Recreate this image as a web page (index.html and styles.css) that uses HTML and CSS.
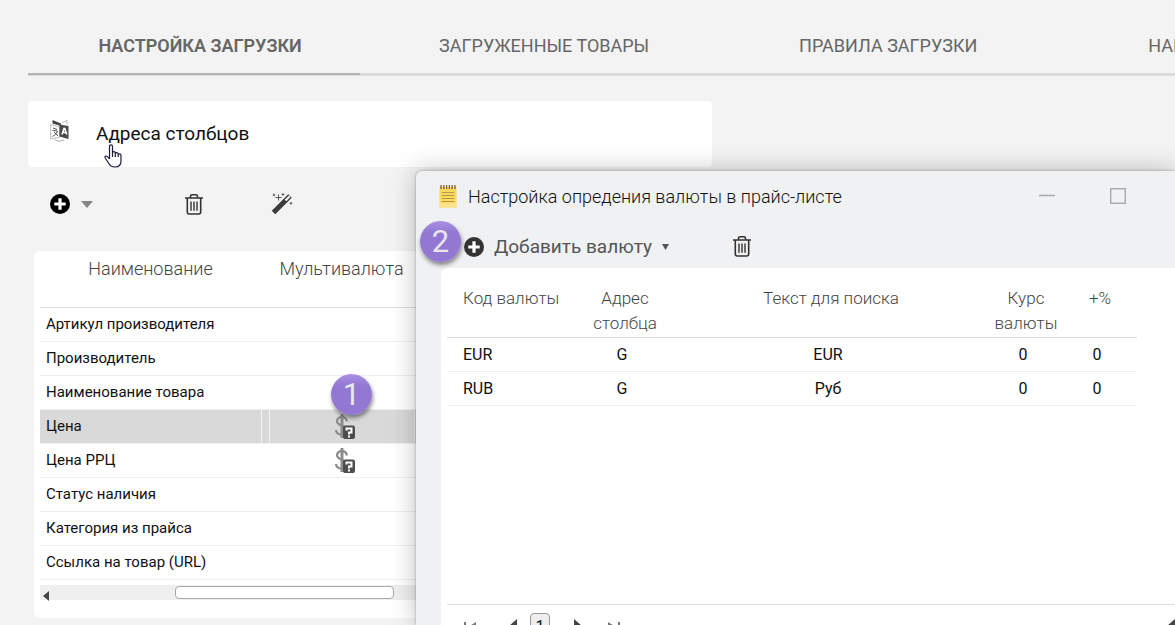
FILE: index.html
```html
<!DOCTYPE html>
<html lang="ru">
<head>
<meta charset="utf-8">
<title>Настройка загрузки</title>
<link rel="stylesheet" href="styles.css">
</head>
<body>
<svg class="defs" aria-hidden="true">
  <symbol id="plus" viewBox="0 0 20 20"><circle cx="10" cy="10" r="10" fill="currentColor"/><path d="M10 4.300v11.400M4.300 10h11.400" stroke="#fff" stroke-width="3.200"/></symbol>
  <symbol id="trash" viewBox="0 0 18 21"><g fill="none" stroke="currentColor" stroke-width="1.600"><path d="M0 4h18M5.500 4V2.200Q5.500 .8 7 .8h4q1.500 0 1.500 1.400V4M2.300 4v14q0 2 2 2h9.400q2 0 2-2V4"/><path d="M6 7.500v9.300M9 7.500v9.300M12 7.500v9.300" stroke-width="1.400"/></g></symbol>
  <symbol id="dollar" viewBox="0 0 20 25"><path d="M7 0v24" stroke="#8b8b8b" stroke-width="3"/><path d="M11.800 7.500C11.500 1.500 2 1.800 2 7c0 5.500 9.500 4 9.500 9.500 0 5.500-10 5.500-10.500-.5" fill="none" stroke="#8b8b8b" stroke-width="2.200"/><rect x="8" y="11.500" width="12" height="13.500" rx="2" fill="#4d4d4d"/><path d="M11.500 16.500v-2h5v4h-2.500v2M14 21.500v2" fill="none" stroke="#fff" stroke-width="2"/></symbol>
</svg>

<nav class="tabs">
  <a class="tab tab-active" href="#settings">НАСТРОЙКА ЗАГРУЗКИ</a>
  <a class="tab" href="#goods">ЗАГРУЖЕННЫЕ ТОВАРЫ</a>
  <a class="tab" href="#rules">ПРАВИЛА ЗАГРУЗКИ</a>
  <a class="tab tab-cut" href="#more">НАП</a>
</nav>

<main class="left">
  <section class="heading-card">
    <svg class="heading-icon" viewBox="0 0 20 22"><path d="M2.500 0 11 3.500V6L2.500 3.500z" fill="#444"/><path d="M.7 4.500 9.500 7v10.500L.7 18.800zM12 2.500l5-2v4" fill="#fff" stroke="#aaa" stroke-width=".8"/><path d="M9.500 4.500 18.500 6v13l-9-2.500z" fill="#4a4a4a"/><path d="m12 14.500 2-6h.8l2 6M12.800 12.500h3.200" fill="none" stroke="#fff" stroke-width="1.600"/><path d="m3 8 4 1.500M2.500 10.500l5 .5q-1.500 4-5 5.500M4 12l4 4" fill="none" stroke="#555" stroke-width="1"/><path d="M4.500 20q5 2.500 9.500 0" fill="none" stroke="#999" stroke-width=".8"/></svg>
    <h1 class="heading">Адреса столбцов</h1>
  </section>

  <div class="toolbar">
    <button class="tool tool-add" aria-label="Добавить"><svg class="icon-plus"><use href="#plus"/></svg><svg class="caret" viewBox="0 0 12 7"><path d="M0 0h12L6 7z" fill="#858585"/></svg></button>
    <button class="tool tool-trash" aria-label="Удалить"><svg class="icon-trash"><use href="#trash"/></svg></button>
    <button class="tool" aria-label="Автозаполнение"><svg class="icon-wand" viewBox="0 0 22 22"><path d="M2.500 19.500 19 3" stroke="#3b3b3b" stroke-width="5"/><path d="m14.500 7.500 4.300-4.300" stroke="#f3f3f3" stroke-width="2.200"/><path d="M7.500 1.500v6M4.500 4.500h6M3 .7v2.600M1.700 2h2.600M12 .2v2.600M10.700 1.500h2.600M20 9v2.600M18.700 10.300h2.600" stroke="#555" stroke-width="1"/></svg></button>
  </div>

  <section class="grid-card">
    <table class="fields">
      <colgroup><col class="c-name"><col class="c-gap"><col class="c-multi"><col></colgroup>
      <thead><tr><th>Наименование</th><th></th><th>Мультивалюта</th><th></th></tr></thead>
      <tbody>
        <tr><td>Артикул производителя</td><td></td><td></td><td></td></tr>
        <tr><td>Производитель</td><td></td><td></td><td></td></tr>
        <tr><td>Наименование товара</td><td></td><td></td><td></td></tr>
        <tr class="selected"><td>Цена</td><td></td><td class="multi"><svg class="icon-dollar"><use href="#dollar"/></svg></td><td></td></tr>
        <tr><td>Цена РРЦ</td><td></td><td class="multi"><svg class="icon-dollar"><use href="#dollar"/></svg></td><td></td></tr>
        <tr><td>Статус наличия</td><td></td><td></td><td></td></tr>
        <tr><td>Категория из прайса</td><td></td><td></td><td></td></tr>
        <tr><td>Ссылка на товар (URL)</td><td></td><td></td><td></td></tr>
      </tbody>
    </table>
    <div class="scroll-track"><svg class="scroll-arrow" viewBox="0 0 6 10"><path d="M6 0v10L0 5z" fill="#444"/></svg><div class="scroll-thumb"></div></div>
  </section>
</main>

<section class="dialog" role="dialog" aria-labelledby="dialog-title">
  <header class="dialog-head">
    <svg class="icon-note" viewBox="0 0 18 24"><rect x=".5" y="3" width="17" height="20.500" rx="1" fill="#fad85c"/><path d="M.5 19h17v4.500H.5z" fill="#fbe58d"/><path d="M3 8.500h12M3 11.500h12M3 14.500h12M3 17.500h12" stroke="#9a8646" stroke-width="1" opacity=".75"/><path d="M2 1v4M4.800 1v4M7.600 1v4M10.400 1v4M13.200 1v4M16 1v4" stroke="#8c6848" stroke-width="1.400"/></svg>
    <h2 class="dialog-title" id="dialog-title">Настройка опредения валюты в прайс-листе</h2>
    <button class="win-btn" aria-label="Свернуть"><svg class="win-icon" viewBox="0 0 16 16"><path d="M0 7.500h16" stroke="#aaa" stroke-width="1.500"/></svg></button>
    <button class="win-btn" aria-label="Развернуть"><svg class="win-icon" viewBox="0 0 16 16"><rect x=".7" y=".7" width="14.600" height="14.600" fill="none" stroke="#aaa" stroke-width="1.400"/></svg></button>
  </header>
  <div class="dialog-tools">
    <button class="tool add-currency"><svg class="icon-plus"><use href="#plus"/></svg><span>Добавить валюту</span><svg class="caret-small" viewBox="0 0 7 6"><path d="M0 0h7L3.500 6z" fill="#555"/></svg></button>
    <button class="tool" aria-label="Удалить валюту"><svg class="icon-trash"><use href="#trash"/></svg></button>
  </div>
  <div class="dialog-body">
    <table class="currencies">
      <colgroup><col class="k-code"><col class="k-addr"><col><col class="k-rate"><col class="k-pct"></colgroup>
      <thead><tr><th class="first">Код валюты</th><th>Адрес столбца</th><th>Текст для поиска</th><th>Курс валюты</th><th>+%</th></tr></thead>
      <tbody>
        <tr><td class="first">EUR</td><td>G</td><td>EUR</td><td>0</td><td>0</td></tr>
        <tr><td class="first">RUB</td><td>G</td><td>Руб</td><td>0</td><td>0</td></tr>
      </tbody>
    </table>
    <footer class="pager">
      <button class="page-btn" aria-label="Первая"><svg class="pg-end" viewBox="0 0 12 10"><path d="M0 0h2v10H0zM12 0v10L4 5z" fill="#777"/></svg></button>
      <button class="page-btn" aria-label="Назад"><svg class="pg-arrow" viewBox="0 0 8 14"><path d="M8 0v14L0 7z" fill="#444"/></svg></button>
      <button class="page-btn page-current">1</button>
      <button class="page-btn" aria-label="Вперёд"><svg class="pg-arrow" viewBox="0 0 8 14"><path d="M0 0v14l8-7z" fill="#444"/></svg></button>
      <button class="page-btn" aria-label="Последняя"><svg class="pg-end" viewBox="0 0 12 10"><path d="M10 0h2v10h-2zM0 0v10l8-5z" fill="#777"/></svg></button>
      <button class="page-btn page-far" aria-label="Свернуть список"><svg class="pg-arrow" viewBox="0 0 8 14"><path d="M8 0v14L0 7z" fill="#444"/></svg></button>
    </footer>
  </div>
</section>

<span class="badge badge-one">1</span>
<span class="badge badge-two">2</span>
<svg class="pointer" viewBox="0 0 18 24"><path d="M5.500 15V2.500Q5.500 .8 7 .8t1.500 1.700V9q0-1.400 1.400-1.400T11.300 9v1q.1-1.300 1.400-1.300T14.200 10v1q.2-1.100 1.400-1.100T17 11.300V17q0 6-6 6-4 0-5.500-2.500L1.200 14q-.8-1.800.8-2 1.500 0 3.500 3M8.500 9v4M11.300 9.500V13M14.200 10.500V13" fill="#fff" stroke="#1c1c3c" stroke-width="1.200" stroke-linejoin="round"/></svg>
</body>
</html>
```

FILE: styles.css
```css
* { box-sizing: border-box; }
html { height: 100%; }
body {
  position: relative;
  height: 100%;
  margin: 0;
  padding-left: 28px;
  overflow: hidden;
  background: #f3f3f3;
  color: #111;
  font-family: Roboto, "Liberation Sans", sans-serif;
  font-size: 16px;
}
button {
  padding: 0;
  border: 0;
  background: none;
  color: inherit;
  font: inherit;
}
svg { display: block; flex: none; }
.defs { position: absolute; width: 0; height: 0; }

.tabs {
  display: flex;
  height: 76px;
  padding-top: 16px;
  border-bottom: 3px solid #dadada;
}
.tab {
  position: relative;
  flex: 0 0 30%;
  color: #666;
  font-size: 18px;
  line-height: 60px;
  text-align: center;
  text-decoration: none;
  white-space: nowrap;
}
.tab-active { font-weight: 600; }
.tab-active::after {
  content: "";
  position: absolute;
  left: 0;
  right: 12px;
  bottom: -2px;
  height: 2px;
  background: #b5b5b5;
}
.tab-cut {
  flex: 1 1 0;
  min-width: 0;
  padding-left: 88px;
  overflow: hidden;
  text-align: left;
}

.left { width: 59.6%; padding-top: 25px; }
.heading-card {
  display: flex;
  align-items: center;
  height: 66px;
  padding-left: 22px;
  border-radius: 4px;
  background: #fff;
}
.heading-icon { width: 20px; height: 22px; margin-bottom: 6px; }
.heading { margin: 0 0 2px 26px; font-size: 19px; font-weight: 400; }

.toolbar {
  display: flex;
  align-items: center;
  height: 74px;
  padding-left: 22px;
}
.tool { display: flex; align-items: center; color: #333; }
.tool-add { gap: 11px; width: 135px; color: #000; }
.tool-trash { width: 86px; }
.icon-plus { width: 20px; height: 20px; }
.caret { width: 12px; height: 7px; }
.icon-trash { width: 18px; height: 21px; }
.icon-wand { width: 22px; height: 22px; }

.grid-card {
  margin: 10px 0 0 6px;
  padding: 0 6px 18px;
  border-radius: 6px;
  background: #fff;
}
table { width: 100%; border-collapse: collapse; table-layout: fixed; }
th { color: #444; font-weight: 300; vertical-align: top; }
.fields th {
  height: 56px;
  padding: 5px 0 0;
  border-bottom: 1px solid #ddd;
  font-size: 18px;
  line-height: 25px;
}
.fields td {
  height: 34px;
  padding: 0 0 0 6px;
  border-bottom: 1px solid #f0f0f0;
  font-size: 15px;
  line-height: 24px;
}
.c-name { width: 221px; }
.c-gap { width: 8px; }
.c-multi { width: 145px; }
.selected td { border-right: 1px solid #f4f4f4; background: #d9d9d9; }
.icon-dollar { width: 20px; height: 25px; margin: 0 auto; }
.scroll-track {
  display: flex;
  align-items: center;
  height: 15px;
  margin-top: 5px;
  padding-left: 3px;
  background: #efefef;
}
.scroll-arrow { width: 6px; height: 10px; margin-top: 8px; }
.scroll-thumb {
  width: 219px;
  height: 13px;
  margin-left: 126px;
  border: 1px solid #aaa;
  border-radius: 4px;
  background: #fff;
}

.dialog {
  position: absolute;
  top: 171px;
  right: 0;
  bottom: 0;
  left: 416px;
  display: flex;
  flex-direction: column;
  border-radius: 6px 0 0 0;
  background: #f0f1f3;
  box-shadow: 0 0 3px rgba(0, 0, 0, .3), 0 0 26px rgba(0, 0, 0, .25);
}
.dialog-head {
  display: flex;
  align-items: center;
  height: 50px;
  padding: 0 49px 0 23px;
}
.icon-note { width: 18px; height: 24px; }
.dialog-title {
  flex: 1;
  margin: 0 0 0 11px;
  font-size: 18px;
  font-weight: 300;
  white-space: nowrap;
}
.win-btn { margin-left: 55px; }
.win-icon { width: 16px; height: 16px; }
.dialog-tools {
  display: flex;
  align-items: center;
  height: 47px;
  padding: 4px 0 0 48px;
}
.add-currency { gap: 10px; width: 269px; color: #333; font-size: 19px; }
.add-currency span { color: #555; }
.caret-small { width: 7px; height: 6px; }
.dialog-body {
  display: flex;
  flex: 1;
  flex-direction: column;
  justify-content: space-between;
  min-height: 0;
  margin-left: 25px;
  padding-left: 6px;
  border-radius: 6px 0 0 0;
  background: #fff;
}
.currencies { width: calc(100% - 38px); }
.currencies th {
  height: 69px;
  padding: 18px 5px 0;
  border-bottom: 1px solid #d8d8d8;
  font-size: 17px;
  line-height: 25px;
}
.currencies td {
  height: 34px;
  padding: 0 6px 0 0;
  border-bottom: 1px solid #ececec;
  text-align: center;
}
.currencies .first { padding-left: 16px; padding-right: 0; text-align: left; white-space: nowrap; }
.k-code { width: 130px; }
.k-addr { width: 96px; }
.k-rate { width: 74px; }
.k-pct { width: 74px; }
.currencies th:nth-child(2) { padding-left: 14px; padding-right: 14px; }
.pager {
  display: flex;
  height: 21px;
  padding: 8px 0 0 17px;
  border-top: 1px solid #ddd;
  overflow: hidden;
}
.page-btn { display: flex; flex: none; align-items: center; height: 26px; }
.pg-end { width: 12px; height: 10px; margin-top: 2px; }
.pg-arrow { width: 8px; height: 14px; margin-left: 33px; }
.page-current {
  justify-content: center;
  width: 20px;
  margin: 0 -9px 0 13px;
  border: 1px solid #999;
  border-radius: 4px;
  background: #eee;
}
.page-current ~ .page-btn .pg-end { margin-left: 26px; }
.page-far { margin-left: auto; }

.badge {
  position: absolute;
  width: 41px;
  height: 41px;
  border-radius: 50%;
  background: linear-gradient(#a98fe4, #9277d3 30%, #9277d3);
  box-shadow: 1px 3px 4px rgba(0, 0, 0, .45);
  color: #e8e5ee;
  font-size: 31px;
  line-height: 41px;
  text-align: center;
}
.badge-one { top: 374px; left: 331px; }
.badge-two { top: 221px; left: 420px; }
.pointer { position: absolute; top: 144px; left: 104px; width: 18px; height: 24px; }
```
